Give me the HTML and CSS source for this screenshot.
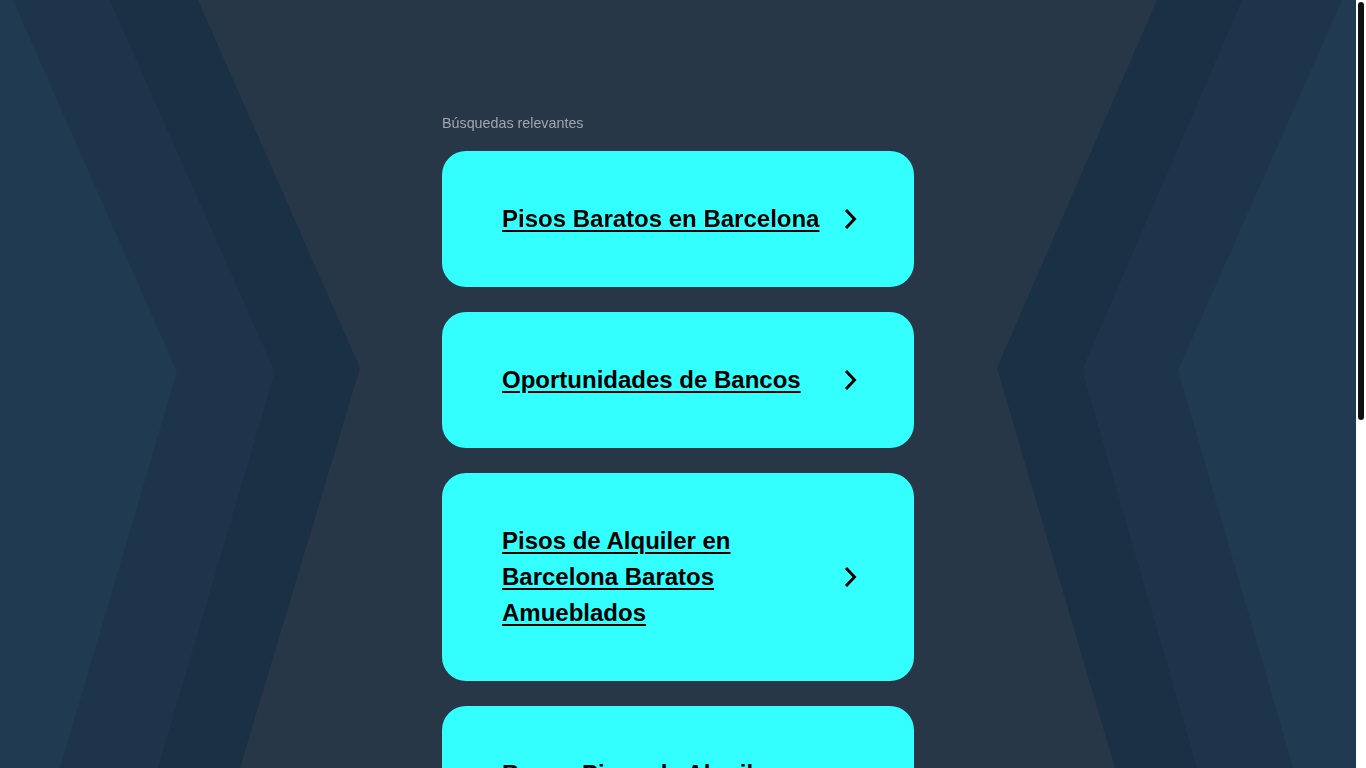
FILE: index.html
```html
<!DOCTYPE html>
<html lang="es">
<head>
    <meta charset="UTF-8">
    <meta name="viewport" content="width=device-width, initial-scale=1.0">
    <title>Búsquedas relevantes</title>
    <link rel="stylesheet" href="styles.css">
</head>
<body>

    <svg class="backdrop" viewBox="0 0 1356 768" preserveAspectRatio="none" aria-hidden="true">
        <polygon fill="#1a3045" points="0,0 198,0 360,368 240,768 0,768"/>
        <polygon fill="#1d344b" points="0,0 110,0 275,372 158,768 0,768"/>
        <polygon fill="#203a51" points="0,0 13,0 177,372 60,768 0,768"/>
        <polygon fill="#1a3045" points="1356,0 1157,0 997,368 1115,768 1356,768"/>
        <polygon fill="#1d344b" points="1356,0 1242,0 1082,370 1197,768 1356,768"/>
        <polygon fill="#203a51" points="1356,0 1342,0 1178,370 1293,768 1356,768"/>
    </svg>

    <!-- полоса прокрутки, как в браузере -->
    <div class="scrollbar"><div class="scrollbar-thumb"></div></div>

    <div class="container">
        <p class="heading">Búsquedas relevantes</p>

        <div class="results">
            <a class="result" href="#">
                <span class="result-text">Pisos Baratos en Barcelona</span>
                <svg class="arrow" viewBox="0 0 13 22"><polyline points="2,2 10.5,11 2,20"/></svg>
            </a>
            <a class="result" href="#">
                <span class="result-text">Oportunidades de Bancos</span>
                <svg class="arrow" viewBox="0 0 13 22"><polyline points="2,2 10.5,11 2,20"/></svg>
            </a>
            <a class="result" href="#">
                <span class="result-text">Pisos de Alquiler en Barcelona Baratos Amueblados</span>
                <svg class="arrow" viewBox="0 0 13 22"><polyline points="2,2 10.5,11 2,20"/></svg>
            </a>
            <a class="result" href="#">
                <span class="result-text">Busco Pisos de Alquiler en Barcelona</span>
                <svg class="arrow" viewBox="0 0 13 22"><polyline points="2,2 10.5,11 2,20"/></svg>
            </a>
            <a class="result" href="#">
                <span class="result-text">Pisos en Venta Barcelona</span>
                <svg class="arrow" viewBox="0 0 13 22"><polyline points="2,2 10.5,11 2,20"/></svg>
            </a>
            <a class="result" href="#">
                <span class="result-text">Alquiler de Pisos Baratos</span>
                <svg class="arrow" viewBox="0 0 13 22"><polyline points="2,2 10.5,11 2,20"/></svg>
            </a>
        </div>
    </div>

</body>
</html>
```

FILE: styles.css
```css
html {
    background-color: #273747;
}
body {
    font-family: "Liberation Sans", Arial, sans-serif;
    margin: 0;
    padding: 0 10px 0 0;
}
.backdrop {
    position: fixed;
    top: 0;
    left: 0;
    width: calc(100% - 10px);
    height: 100%;
    z-index: -1;
}
.scrollbar {
    position: fixed;
    top: 0;
    right: 0;
    width: 10px;
    height: 100%;
    background-color: #fff;
    z-index: 5;
}
.scrollbar-thumb {
    margin: 2px 2px 0;
    height: 418px;
    background-color: #111;
    border-radius: 3px;
}
.container {
    width: 472px;
    margin: 0 auto;
    padding: 115px 0 211px;
}
.heading {
    margin: 0 0 19px;
    font-size: 14.3px;
    line-height: 17px;
    color: #a2a6ab;
}
.results {
    display: flex;
    flex-direction: column;
    gap: 25px;
}
.result {
    display: flex;
    align-items: center;
    gap: 16px;
    padding: 50px 57px 50px 60px;
    background-color: #33ffff;
    border-radius: 24px;
    color: #000;
    text-decoration: none;
}
.result-text {
    flex: 1;
    font-size: 24px;
    font-weight: bold;
    line-height: 36px;
    text-decoration: underline;
    text-decoration-thickness: 2px;
    text-underline-offset: 3px;
}
.arrow {
    width: 13px;
    height: 22px;
    flex-shrink: 0;
    fill: none;
    stroke: #000;
    stroke-width: 3;
}
```
